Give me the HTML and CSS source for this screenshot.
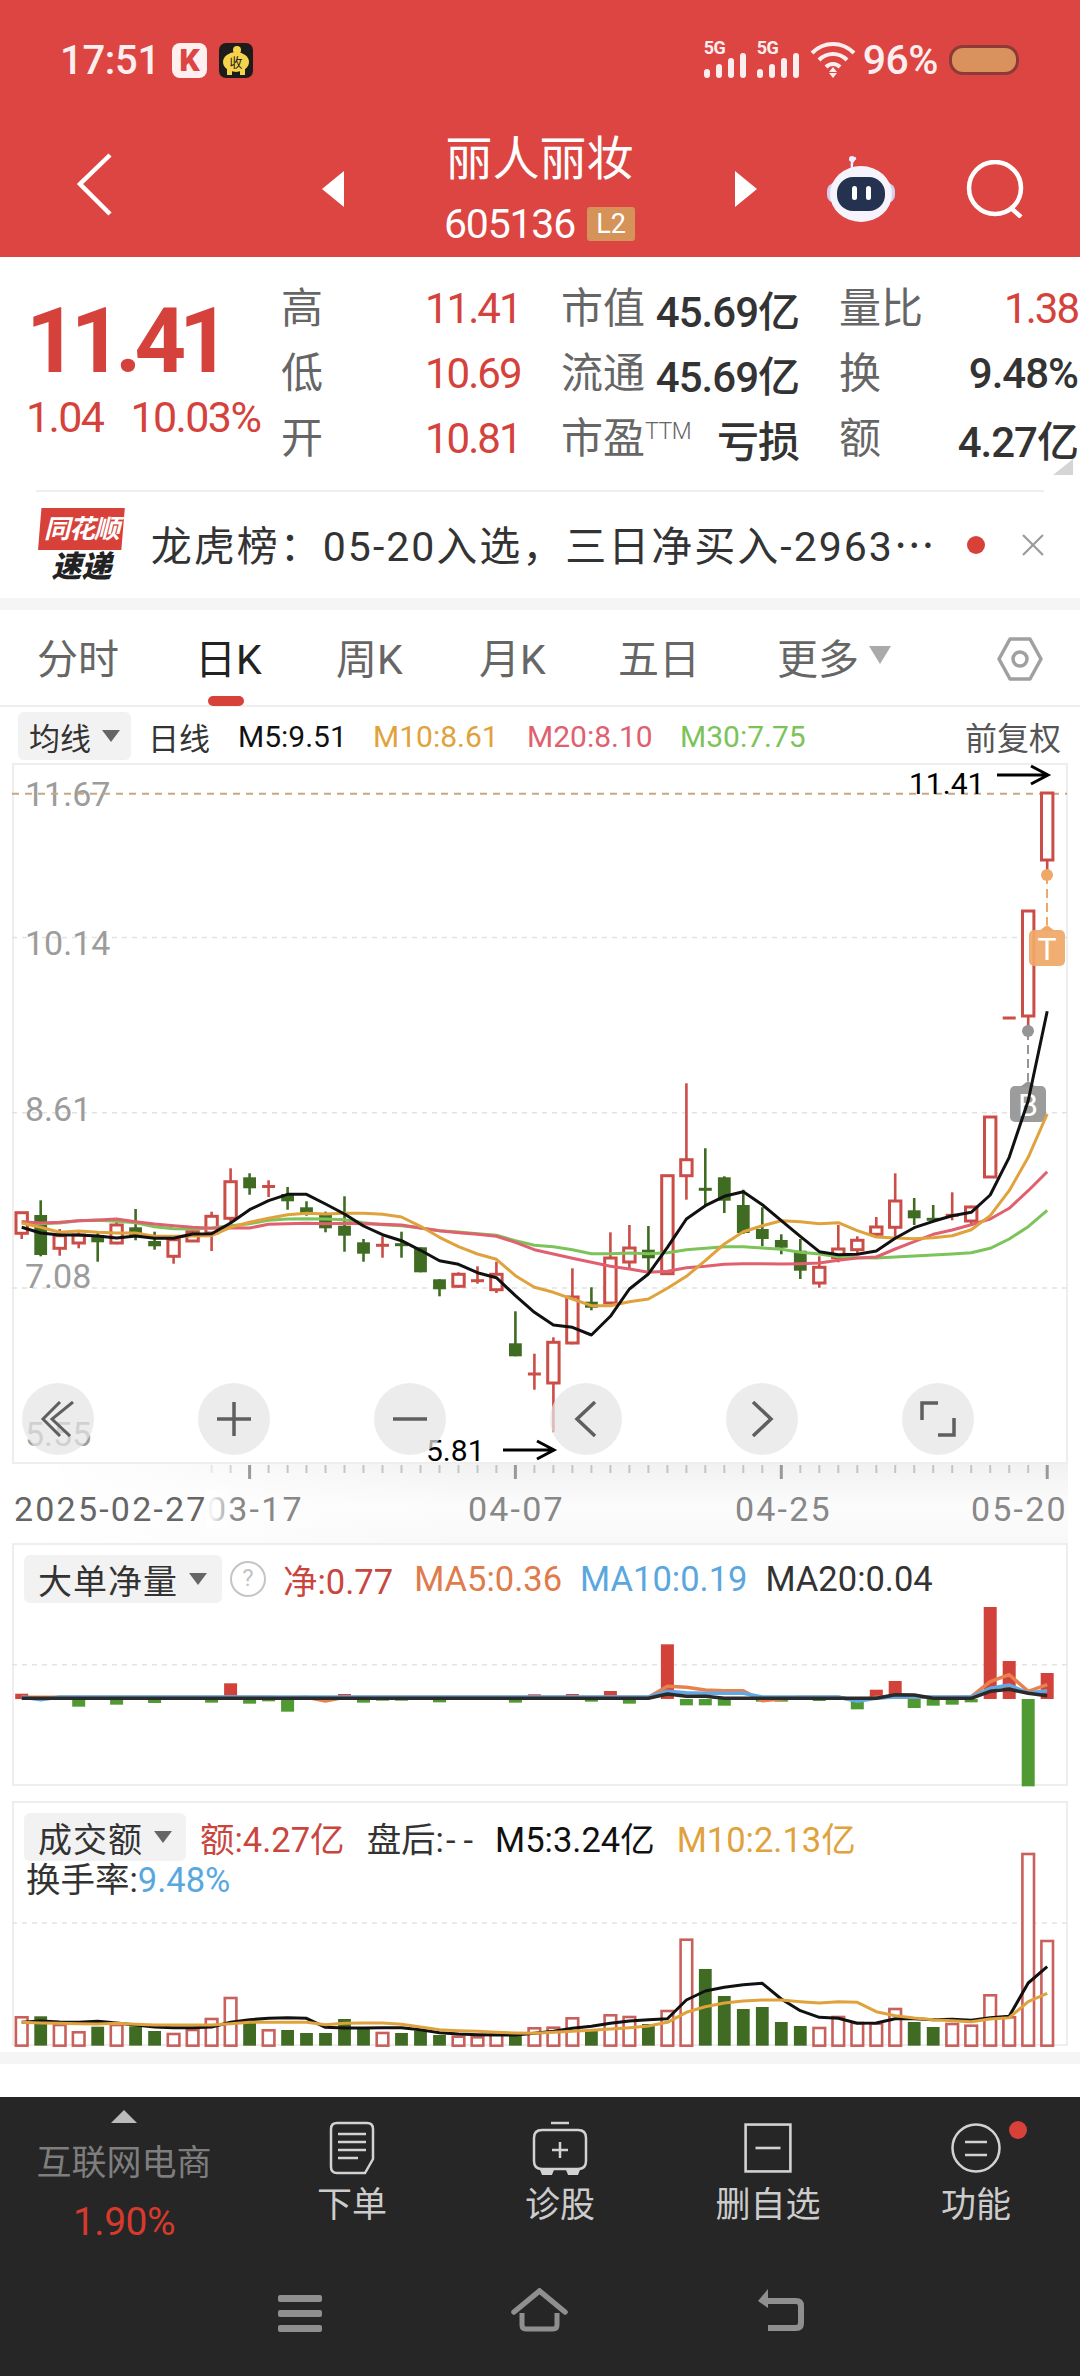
FILE: index.html
```html
<!DOCTYPE html>
<html lang="zh-CN">
<head>
    <meta charset="utf-8">
    <title>丽人丽妆</title>
    <link rel="stylesheet" href="styles.css">
</head>
<body>
    <header class="top">
        <div class="status">
            <span class="clock">17:51</span>
            <span class="k-badge">K</span>
            <svg class="pig" viewBox="0 0 34 35">
                <rect width="34" height="35" rx="7" fill="#1c1c1c"/>
                <circle cx="18" cy="7" r="4" fill="#f5d34a"/>
                <ellipse cx="17" cy="19" rx="13" ry="10" fill="#f5d34a"/>
                <rect x="8" y="26" width="5" height="6" fill="#f5d34a"/>
                <rect x="21" y="26" width="5" height="6" fill="#f5d34a"/>
                <text x="17" y="24" class="pig-text">收</text>
            </svg>
            <span class="spacer"></span>
            <span class="signal"><small>5G</small><i class="b1"></i><i class="b2"></i><i class="b3"></i><i class="b4"></i></span>
            <span class="signal"><small>5G</small><i class="b1"></i><i class="b2"></i><i class="b3"></i><i class="b4"></i></span>
            <svg class="wifi" viewBox="0 0 46 36" fill="none" stroke="#fbeeee" stroke-width="4">
                <path d="M2 11 C14 -1 32 -1 44 11"/>
                <path d="M9 18 C17 10 29 10 37 18"/>
                <path d="M16 25 C20 21 26 21 30 25"/>
                <path d="M19 30 l4 -5 l4 5 z M19 31 l4 5 l4 -5 z" fill="#fbeeee" stroke="none"/>
            </svg>
            <span class="batt-num">96%</span>
            <span class="battery"><i></i></span>
        </div>
        <div class="nav">
            <svg class="back" viewBox="0 0 35 63" fill="none" stroke="#fff" stroke-width="4.5"><path d="M33 2 L3 31 L33 61"/></svg>
            <span class="tri-left"></span>
            <div class="title">
                <div class="name">丽人丽妆</div>
                <div class="code"><span>605136</span><b>L2</b></div>
            </div>
            <span class="tri-right"></span>
            <svg class="robot" viewBox="0 0 72 66">
                <path d="M27 13 C26 6 28 3 31 2" fill="none" stroke="#eef" stroke-width="2.5"/>
                <circle cx="27" cy="3" r="3" fill="#eef"/>
                <rect x="2" y="27" width="68" height="20" rx="8" fill="#d3cff0"/>
                <ellipse cx="36" cy="38" rx="31" ry="28" fill="#f5f4fd"/>
                <rect x="12" y="21" width="48" height="34" rx="16" fill="#25324f"/>
                <rect x="27" y="30" width="5" height="14" rx="2.5" fill="#fff"/>
                <rect x="41" y="30" width="5" height="14" rx="2.5" fill="#fff"/>
            </svg>
            <svg class="search" viewBox="0 0 60 58" fill="none" stroke="#fff" stroke-width="4.5"><circle cx="29" cy="28" r="26"/><path d="M45 48 L55 57"/></svg>
        </div>
    </header>

    <section class="quote">
        <div class="price-box">
            <div class="price">11.41</div>
            <div class="change"><span>1.04</span><span>10.03%</span></div>
        </div>
        <div class="stats">
            <span class="lbl">高</span><span class="val red">11.41</span>
            <div class="pair"><span class="lbl">市值</span><span class="val">45.69亿</span></div>
            <div class="pair"><span class="lbl">量比</span><span class="val red">1.38</span></div>
            <span class="lbl">低</span><span class="val red">10.69</span>
            <div class="pair"><span class="lbl">流通</span><span class="val">45.69亿</span></div>
            <div class="pair"><span class="lbl">换</span><span class="val">9.48%</span></div>
            <span class="lbl">开</span><span class="val red">10.81</span>
            <div class="pair"><span class="lbl">市盈<sup>TTM</sup></span><span class="val">亏损</span></div>
            <div class="pair"><span class="lbl">额</span><span class="val">4.27亿</span></div>
        </div>
        <span class="corner"></span>
    </section>

    <section class="news">
        <div class="news-logo">
            <div class="logo-tag">同花顺</div>
            <div class="logo-sub">速递</div>
        </div>
        <div class="news-text">龙虎榜：05-20入选，三日净买入-2963<span class="dots">…</span></div>
        <span class="news-dot"></span>
        <svg class="news-close" viewBox="0 0 22 22" fill="none" stroke="#9b9b9b" stroke-width="2.2"><path d="M1 1 L21 21 M21 1 L1 21"/></svg>
    </section>
    <div class="band"></div>

    <nav class="tabs">
        <span class="tab t1">分时</span>
        <span class="tab t2 active">日K</span>
        <span class="tab t3">周K</span>
        <span class="tab t4">月K</span>
        <span class="tab t5">五日</span>
        <span class="tab t6">更多<i class="caret big"></i></span>
        <svg class="hex" viewBox="0 0 46 46" fill="none" stroke="#a0a0a0" stroke-width="3.5"><path d="M13 3 H33 L44 23 L33 43 H13 L2 23 Z" stroke-linejoin="round"/><circle cx="23" cy="23" r="7"/></svg>
    </nav>

    <div class="ma-row">
        <span class="pick">均线<i class="caret"></i></span>
        <span class="ma-day">日线</span>
        <span class="ma m5">M5:9.51</span>
        <span class="ma m10">M10:8.61</span>
        <span class="ma m20">M20:8.10</span>
        <span class="ma m30">M30:7.75</span>
        <span class="fq">前复权</span>
    </div>

    <section class="panel main-panel">
        <svg id="kline" class="plot" viewBox="12 764 1055 699"></svg>
        <div class="zoom-btns">
            <span class="zbtn"><svg viewBox="0 0 36 36" fill="none" stroke="#5f5f5f" stroke-width="3"><path d="M20 1 L3 18 L20 35 M33 1 L12 18 L30 35"/></svg></span>
            <span class="zbtn"><svg viewBox="0 0 36 36" fill="none" stroke="#5f5f5f" stroke-width="3.5"><path d="M1 18 H35 M18 1 V35"/></svg></span>
            <span class="zbtn"><svg viewBox="0 0 36 36" fill="none" stroke="#5f5f5f" stroke-width="3.5"><path d="M1 18 H35"/></svg></span>
            <span class="zbtn"><svg viewBox="0 0 36 36" fill="none" stroke="#5f5f5f" stroke-width="3.5"><path d="M27 1 L9 18 L27 35"/></svg></span>
            <span class="zbtn"><svg viewBox="0 0 36 36" fill="none" stroke="#5f5f5f" stroke-width="3.5"><path d="M9 1 L27 18 L9 35"/></svg></span>
            <span class="zbtn"><svg viewBox="0 0 36 36" fill="none" stroke="#5f5f5f" stroke-width="3.5"><path d="M2 19 V2 H18 M34 17 V34 H18"/></svg></span>
        </div>
    </section>

    <div class="axis">
        <svg id="ticks" class="ticks" viewBox="0 1463 1068 20"></svg>
        <div class="dates">
            <span class="d0">2025-02-27</span>
            <span class="d1">03-17</span>
            <span class="d2">04-07</span>
            <span class="d3">04-25</span>
            <span class="d4">05-20</span>
        </div>
    </div>

    <section class="panel sub sub-flow">
        <svg id="flow" class="plot" viewBox="12 1544 1055 243"></svg>
        <div class="sub-head">
            <span class="pick wide">大单净量<i class="caret"></i></span>
            <span class="help">?</span>
            <span class="red2 first">净:0.77</span>
            <span class="orange">MA5:0.36</span>
            <span class="blue">MA10:0.19</span>
            <span class="dark">MA20:0.04</span>
        </div>
    </section>

    <section class="panel sub sub-amount">
        <svg id="amount" class="plot" viewBox="12 1802 1055 245"></svg>
        <div class="sub-head tight">
            <span class="pick wide">成交额<i class="caret"></i></span>
            <span class="red2">额:4.27亿</span>
            <span class="dark">盘后:<span class="dashes">--</span></span>
            <span class="black">M5:3.24亿</span>
            <span class="amber">M10:2.13亿</span>
        </div>
        <div class="turnover">换手率:<span class="blue">9.48%</span></div>
    </section>

    <div class="band lower"></div>
    <div class="blank"></div>

    <footer class="bottom">
        <div class="tools">
            <div class="sector">
                <i class="up-tri"></i>
                <div class="sector-name">互联网电商</div>
                <div class="sector-pct">1.90%</div>
            </div>
            <div class="tool">
                <svg viewBox="0 0 46 54" fill="none" stroke="#d2d2d2" stroke-width="2.5"><path d="M8 2 H38 Q44 2 44 8 V38 L36 52 H8 Q2 52 2 46 V8 Q2 2 8 2 Z"/><path d="M9 13 H37 M9 21 H37 M9 29 H37 M9 37 H29"/></svg>
                <span>下单</span>
            </div>
            <div class="tool">
                <svg viewBox="0 0 56 54" fill="none" stroke="#d2d2d2" stroke-width="2.5"><path d="M19 2 H37"/><path d="M10 9 H46 Q54 9 54 17 V40 Q54 48 46 48 H10 Q2 48 2 40 V17 Q2 9 10 9 Z"/><path d="M20 29 H36 M28 21 V37"/><path d="M9 48 L11 53 H19 L21 48 M35 48 L37 53 H45 L47 48" fill="#d2d2d2"/></svg>
                <span>诊股</span>
            </div>
            <div class="tool">
                <svg class="pad" viewBox="0 0 46 48" fill="none" stroke="#d2d2d2" stroke-width="2.5"><rect x="1.5" y="1.5" width="43" height="45"/><path d="M11 24 H35"/></svg>
                <span>删自选</span>
            </div>
            <div class="tool">
                <svg class="pad" viewBox="0 0 50 50" fill="none" stroke="#d2d2d2" stroke-width="2.5"><circle cx="25" cy="25" r="23.5"/><path d="M14 19 H36 M14 32 H36"/></svg>
                <span>功能</span>
                <i class="tool-dot"></i>
            </div>
        </div>
        <div class="sysnav">
            <span class="menu"><i></i><i></i><i></i></span>
            <svg class="home" viewBox="0 0 57 44" fill="none" stroke="#8f8f8f"><path d="M3 24 L28.5 3 L54 24" stroke-width="5.5" stroke-linecap="round"/><path d="M11 25 V37 Q11 41 15 41 H42 Q46 41 46 37 V25" stroke-width="5"/></svg>
            <svg class="ret" viewBox="0 0 48 43" fill="none" stroke="#8f8f8f" stroke-width="6"><path d="M9 13 H40 Q45 13 45 18 V35 Q45 40 40 40 H12"/><path d="M12 1 L2 13 L12 20 Z" fill="#8f8f8f" stroke="none"/></svg>
        </div>
    </footer>

    <script src="chart.js"></script>
</body>
</html>
```

FILE: styles.css
```css
* {
    box-sizing: border-box;
}

body {
    margin: 0;
    width: 1080px;
    height: 2376px;
    overflow: hidden;
    background: #fff;
    font-family: Roboto, "Noto Sans CJK SC", sans-serif;
    color: #333;
}

i {
    display: block;
}

/* top red bar */
.top {
    height: 257px;
    background: #dc4541;
    color: #fff;
}

.status {
    height: 120px;
    display: flex;
    align-items: center;
    padding: 0 61px 0 60px;
    color: #fbeeee;
}

.clock {
    font-size: 40px;
    font-weight: 500;
    letter-spacing: -0.3px;
    width: 112px;
}

.k-badge {
    width: 35px;
    height: 35px;
    border-radius: 8px;
    background: #fdf0ef;
    color: #dc4541;
    font-size: 32px;
    font-weight: 900;
    line-height: 35px;
    text-align: center;
}

.pig {
    width: 34px;
    height: 35px;
    margin-left: 12px;
}

.pig-text {
    font-size: 13px;
    fill: #222;
    text-anchor: middle;
}

.spacer {
    flex: 1;
}

.signal {
    position: relative;
    width: 42px;
    height: 36px;
    margin-right: 11px;
}

.signal small {
    position: absolute;
    left: 0;
    top: -5px;
    font-size: 18px;
    font-weight: 700;
    letter-spacing: -0.5px;
}

.signal i {
    position: absolute;
    bottom: 0;
    width: 6px;
    border-radius: 3px;
    background: #fbeeee;
}

.signal .b1 { left: 0; height: 9px; }
.signal .b2 { left: 12px; height: 14px; }
.signal .b3 { left: 24px; height: 20px; }
.signal .b4 { left: 36px; height: 25px; }

.wifi {
    width: 46px;
    height: 36px;
}

.batt-num {
    font-size: 41px;
    font-weight: 500;
    margin-left: 7px;
    letter-spacing: -0.5px;
}

.battery {
    width: 70px;
    height: 30px;
    margin-left: 11px;
    border: 3px solid #8b3a35;
    border-radius: 14px;
    background: #d9925e;
}

.nav {
    height: 137px;
    display: flex;
    align-items: center;
    padding-left: 77px;
}

.back {
    width: 35px;
    height: 63px;
    margin-top: -8px;
}

.tri-left,
.tri-right {
    width: 0;
    height: 0;
    border-top: 18px solid transparent;
    border-bottom: 18px solid transparent;
}

.tri-left {
    margin-left: 210px;
    border-right: 22px solid #fff;
}

.tri-right {
    border-left: 22px solid #fff;
}

.title {
    width: 391px;
    text-align: center;
    margin-top: -5px;
}

.name {
    font-size: 47px;
    line-height: 56px;
}

.code {
    display: flex;
    justify-content: center;
    align-items: center;
    gap: 12px;
    margin-top: 20px;
    font-size: 41px;
    line-height: 34px;
    letter-spacing: -1.2px;
}

.code b {
    flex: none;
    width: 48px;
    height: 34px;
    border-radius: 3px;
    background: #d5935a;
    font-size: 27px;
    font-weight: 400;
    letter-spacing: 0;
    line-height: 34px;
}

.robot {
    width: 72px;
    height: 66px;
    margin-left: 68px;
}

.search {
    width: 60px;
    height: 58px;
    margin-left: 69px;
}

/* quote block */
.quote {
    position: relative;
    height: 233px;
    display: flex;
}

.price-box {
    width: 281px;
    padding: 45px 0 0 26px;
    color: #d4423b;
}

.price {
    font-size: 90px;
    line-height: 80px;
    font-weight: 700;
    letter-spacing: -7px;
}

.change {
    display: flex;
    gap: 27px;
    margin: 15px 0 0 0;
    font-size: 43px;
    line-height: 40px;
    letter-spacing: -1.6px;
    white-space: nowrap;
}

.stats {
    display: grid;
    grid-template-columns: 144px 136px 238px 239px;
    grid-auto-rows: 65px;
    align-items: center;
    padding-top: 19px;
}

.pair {
    display: flex;
    justify-content: space-between;
    align-items: center;
}

.stats .pair:nth-child(4n) {
    margin-left: 40px;
    margin-right: -40px;
}

.lbl {
    font-size: 42px;
    color: #666;
    white-space: nowrap;
    margin-bottom: 8px;
}

.lbl sup {
    font-size: 23px;
    font-weight: 300;
    vertical-align: 14px;
    line-height: 0;
    letter-spacing: -0.5px;
}

.val {
    font-size: 42px;
    font-weight: 500;
    color: #333;
    letter-spacing: -1px;
    white-space: nowrap;
}

.val.red {
    color: #d4423b;
    font-weight: 400;
    letter-spacing: -2px;
}

.corner {
    position: absolute;
    right: 7px;
    top: 202px;
    border-left: 20px solid transparent;
    border-bottom: 16px solid #d5d5d5;
}

/* news strip */
.news {
    height: 108px;
    margin: 0 36px;
    width: 1008px;
    display: flex;
    align-items: center;
    border-top: 2px solid #eee;
}

.news-logo {
    width: 87px;
    margin-left: 2px;
}

.logo-tag {
    height: 42px;
    background: #d8413a;
    clip-path: polygon(4% 0, 100% 0, 96% 100%, 0 100%);
    color: #fff;
    font-size: 26px;
    font-weight: 700;
    font-style: italic;
    line-height: 42px;
    text-align: center;
    letter-spacing: -1px;
}

.logo-sub {
    color: #222;
    font-size: 30px;
    font-weight: 900;
    font-style: italic;
    line-height: 30px;
    text-align: center;
    margin-top: 2px;
}

.news-text {
    width: 818px;
    margin: 0 0 4px 26px;
    font-size: 41px;
    letter-spacing: 2px;
    color: #333;
    white-space: nowrap;
}

.dots {
    font-family: "Noto Sans CJK SC", sans-serif;
    letter-spacing: 0;
}

.news-dot {
    width: 18px;
    height: 18px;
    border-radius: 50%;
    background: #d8413a;
}

.news-close {
    width: 22px;
    height: 22px;
    margin-left: 37px;
}

.band {
    height: 12px;
    background: #f5f5f5;
}

/* period tabs */
.tabs {
    position: relative;
    height: 97px;
    display: flex;
    align-items: center;
    padding: 0 0 4px 37px;
    border-bottom: 2px solid #eee;
}

.tab {
    font-size: 41px;
    color: #666;
    display: flex;
    align-items: center;
    white-space: nowrap;
}

.t1 { width: 158px; }
.t2 { width: 141px; }
.t3 { width: 143px; }
.t4 { width: 139px; }
.t5 { width: 159px; }
.t6 { width: 220px; }

.tab.active {
    color: #222;
    position: relative;
}

.tab.active::after {
    content: "";
    position: absolute;
    left: 13px;
    top: 70px;
    width: 36px;
    height: 10px;
    border-radius: 5px;
    background: #d8413a;
}

.caret {
    width: 0;
    height: 0;
    border-left: 9px solid transparent;
    border-right: 9px solid transparent;
    border-top: 12px solid #666;
    margin-left: 11px;
}

.caret.big {
    border-left-width: 11px;
    border-right-width: 11px;
    border-top: 18px solid #aaa;
    margin-left: 10px;
    margin-top: -2px;
}

.hex {
    position: absolute;
    left: 997px;
    top: 26px;
    width: 46px;
    height: 46px;
}

/* moving average row */
.ma-row {
    height: 56px;
    padding: 2px 19px 0 18px;
    display: flex;
    align-items: center;
    font-size: 30px;
    white-space: nowrap;
}

.pick {
    display: flex;
    align-items: center;
    height: 48px;
    width: 113px;
    padding-left: 11px;
    border-radius: 6px;
    background: #f2f2f2;
    color: #333;
}

.ma-row .pick,
.ma-day {
    font-size: 31px;
}

.ma-day {
    margin-left: 17px;
    color: #333;
}

.m5 { margin-left: 28px; color: #111; width: 135px; }
.m10 { color: #dfa23c; width: 154px; }
.m20 { color: #e0606f; width: 153px; }
.m30 { color: #7cc35a; width: 157px; }

.fq {
    margin-left: auto;
    color: #555;
    font-size: 32px;
}

/* chart panels */
.panel {
    position: relative;
    margin-left: 12px;
    width: 1056px;
    border: 2px solid #eee;
}

.main-panel {
    height: 701px;
}

.plot {
    position: absolute;
    left: -2px;
    top: -2px;
    width: 1055px;
    overflow: visible;
}

.main-panel .plot { height: 699px; }
.sub-flow .plot { height: 243px; }
.sub-amount .plot { height: 245px; }

.plot text {
    font-family: Roboto, sans-serif;
}

.zoom-btns {
    position: absolute;
    left: 8px;
    top: 618px;
    display: flex;
    gap: 104px;
}

.zbtn {
    width: 72px;
    height: 72px;
    border-radius: 50%;
    background: rgba(229, 229, 229, 0.72);
    display: flex;
    align-items: center;
    justify-content: center;
}

.zbtn svg {
    width: 36px;
    height: 36px;
}

/* date axis */
.axis {
    width: 1068px;
    height: 80px;
    margin-top: -1px;
    background:
        linear-gradient(90deg, #fff 4%, rgba(255, 255, 255, 0) 45%),
        linear-gradient(180deg, #f1f1f1, #fcfcfc 55%, #f8f8f8);
}

.ticks {
    display: block;
    width: 1068px;
    height: 20px;
}

.dates {
    display: flex;
    padding: 6px 0 0 14px;
    font-size: 34px;
    line-height: 40px;
    letter-spacing: 2.2px;
    color: #888;
    white-space: nowrap;
}

.d0 {
    position: relative;
    width: 193px;
    color: #666;
}

.d0::after {
    content: "";
    position: absolute;
    left: 192px;
    top: 0;
    width: 28px;
    height: 40px;
    background: linear-gradient(90deg, rgba(255, 255, 255, 0.9) 20%, rgba(255, 255, 255, 0));
}

.d1 { width: 261px; }
.d2 { width: 267px; }
.d3 { width: 236px; }

.sub {
    height: 243px;
}

.sub-amount {
    height: 245px;
    margin-top: 15px;
}

.sub-head {
    position: relative;
    display: flex;
    align-items: center;
    gap: 18px;
    padding: 9px 0 0 10px;
    font-size: 34.5px;
    white-space: nowrap;
}

.sub-head.tight {
    gap: 14px;
}

.pick.wide {
    width: 198px;
    padding-left: 14px;
    font-size: 34px;
    letter-spacing: 1px;
    justify-content: space-between;
    padding-right: 15px;
}

.sub-amount .pick.wide {
    width: 162px;
}

.help {
    width: 36px;
    height: 36px;
    margin-left: -10px;
    border: 2.5px solid #c4c4c4;
    border-radius: 50%;
    color: #c4c4c4;
    font-size: 24px;
    line-height: 31px;
    text-align: center;
}

.first {
    margin-left: -1px;
}

.red2 { color: #c9463f; }
.orange { color: #e07b4c; margin-left: 3px; }
.blue { color: #5aa7e0; }
.turnover .blue { margin-left: 0; }
.dark { color: #333; margin-left: 8px; }
.sub-flow .dark { margin-left: 0; }
.black { color: #111; }
.amber { color: #dfa23c; margin-left: 8px; }

.dashes {
    letter-spacing: 8px;
    margin-left: 2px;
}

.turnover {
    position: relative;
    padding-left: 12px;
    font-size: 34.5px;
    line-height: 36px;
    color: #333;
}

.band.lower {
    margin-top: 6px;
}

.blank {
    height: 33px;
}

/* bottom bar */
.bottom {
    height: 279px;
    background: #262626;
    color: #ccc;
}

.tools {
    height: 191px;
    display: grid;
    grid-template-columns: 248px repeat(4, 208px);
}

.sector {
    text-align: center;
    padding-top: 13px;
}

.up-tri {
    width: 0;
    height: 0;
    margin: 0 auto;
    border-left: 13px solid transparent;
    border-right: 13px solid transparent;
    border-bottom: 13px solid #bbb;
}

.sector-name {
    font-size: 35px;
    line-height: 50px;
    margin-top: 16px;
    color: #7e7e7e;
}

.sector-pct {
    font-size: 39px;
    line-height: 44px;
    margin-top: 11px;
    color: #d63a2c;
    letter-spacing: -0.5px;
}

.tool {
    position: relative;
    display: flex;
    flex-direction: column;
    align-items: center;
    padding-top: 24px;
    font-size: 35px;
}

.tool svg {
    height: 54px;
    width: 56px;
}

.tool svg.pad {
    height: 50px;
    margin: 2px 0;
}

.tool span {
    margin-top: 6px;
    line-height: 50px;
    white-space: nowrap;
}

.tool-dot {
    position: absolute;
    left: 137px;
    top: 24px;
    width: 18px;
    height: 18px;
    border-radius: 50%;
    background: #d8413a;
}

.sysnav {
    display: flex;
    align-items: flex-start;
    padding-left: 278px;
}

.menu {
    width: 44px;
    padding-top: 7px;
}

.menu i {
    height: 7px;
    border-radius: 2px;
    background: #8f8f8f;
    margin-bottom: 8px;
}

.home {
    width: 57px;
    height: 44px;
    margin-left: 189px;
}

.ret {
    width: 48px;
    height: 43px;
    margin-left: 188px;
}
```

FILE: chart.js
```js
// y values below are screen samples, 3 units to the pixel, measured from the top of each chart block
const X = i => 21.7 + 18.99 * i;
const RED = '#cb4d47', GREEN = '#3f6b23';

function yMap(base) {
    return z => +(base + z / 3).toFixed(1);
}

function polyline(values, map, color, width) {
    const pts = values.map((z, i) => X(i).toFixed(1) + ',' + map(z)).join(' ');
    return `<polyline points="${pts}" fill="none" stroke="${color}" stroke-width="${width}" stroke-linejoin="round"/>`;
}

function dashed(x1, x2, y, color, width, dash) {
    return `<line x1="${x1}" x2="${x2}" y1="${y}" y2="${y}" stroke="${color}" stroke-width="${width}" stroke-dasharray="${dash}"/>`;
}

// u/d, high, body top, body bottom, low
const candles = [
    ['u',401,401,463,480],['d',364,408,528,532],['u',450,470,508,530],['u',460,468,492,508],
    ['d',462,468,490,548],['u',420,438,492,496],['d',390,445,470,484],['d',458,486,502,512],
    ['u',476,482,532,554],['u',445,458,486,488],['u',398,412,462,516],['u',268,308,418,430],
    ['d',283,295,328,347],['u',304,321,324,354],['d',324,345,367,392],['d',367,385,402,410],
    ['d',398,405,448,460],['d',352,440,470,518],['d',480,490,524,548],['u',472,496,502,536],
    ['d',458,495,499,536],['d',505,505,580,580],['d',601,601,631,652],['u',580,586,622,626],
    ['u',562,603,607,614],['u',548,586,632,642],['d',697,793,832,832],['u',824,883,887,932],
    ['u',775,790,912,1060],['u',568,654,792,796],['d',625,668,686,694],['u',460,537,672,676],
    ['u',438,507,549,572],['d',441,512,538,580],['u',290,290,584,584],['u',13,242,290,362],
    ['d',208,325,337,380],['d',292,295,365,402],['d',332,378,462,465],['d',385,450,480,502],
    ['d',466,483,506,526],['d',480,515,575,600],['u',532,565,612,626],['u',438,510,536,550],
    ['u',472,484,512,525],['u',414,444,466,476],['u',283,366,445,475],['d',357,394,418,438],
    ['d',378,418,424,430],['u',340,407,411,424],['u',380,384,426,438],['u',114,114,294,294],
    ['u',-183,-183,-183,-183],['u',-504,-504,-189,-144],['u',-858,-858,-657,-612]
];

const ma5 = [445,462,468,468,471,477,471,478,478,465,464,432,392,365,346,346,375,405,441,467,485,514,545,556,581,596,650,700,
    738,745,768,712,630,585,505,420,380,352,338,377,425,472,518,527,526,516,478,446,427,410,400,348,235,65,-203];
const ma10 = [432,445,460,456,460,462,462,472,472,471,470,445,430,418,407,403,405,403,403,406,414,442,475,503,525,541,590,625,
    640,660,680,680,668,660,628,592,545,495,458,440,425,428,434,431,455,474,477,479,476,470,452,410,335,235,105];
const ma20 = [428,432,430,425,423,420,428,435,440,445,448,446,447,436,434,433,434,433,434,436,438,447,455,461,466,472,490,512,
    525,538,550,562,570,580,577,566,562,556,554,554,555,554,552,544,537,534,510,488,466,453,437,420,388,335,278];
const ma30 = [428,434,432,425,424,427,431,443,449,450,447,440,434,424,420,419,420,422,431,437,440,447,455,459,464,469,485,499,
    503,512,524,524,522,524,521,512,508,503,503,507,511,520,525,533,536,537,534,531,528,525,521,508,480,443,394];

function arrow(x1, x2, y) {
    return `<path d="M${x1} ${y} H${x2} M${x2 - 17} ${y - 9} L${x2} ${y} L${x2 - 17} ${y + 9}" fill="none" stroke="#000" stroke-width="3"/>`;
}

function flag(x, top, color, letter, dotY) {
    return `<line x1="${x}" x2="${x}" y1="${dotY}" y2="${top}" stroke="${color}" stroke-width="2" stroke-dasharray="9 5"/>` +
        `<circle cx="${x}" cy="${dotY}" r="6" fill="${color}"/>` +
        `<path d="M${x - 8} ${top + 6} L${x} ${top} L${x + 8} ${top + 6} Z" fill="${color}"/>` +
        `<rect x="${x - 18}" y="${top + 5}" width="36" height="36" rx="5" fill="${color}" fill-opacity=".93"/>` +
        `<text x="${x}" y="${top + 35}" font-size="32" fill="#fff" text-anchor="middle">${letter}</text>`;
}

function drawKline() {
    const y = yMap(1080);
    let out = '';

    [938.5, 1113.7, 1289].forEach(g => {
        out += dashed(12, 1067, g, '#e2e2e2', 1.5, '5 5');
    });
    [['11.67', 807], ['10.14', 956], ['8.61', 1122], ['7.08', 1289], ['5.55', 1447]].forEach(([t, b]) => {
        out += `<text x="25" y="${b}" font-size="34" fill="#9c9c9c">${t}</text>`;
    });
    out += dashed(12, 1067, 794.7, '#c8a882', 2, '7 6');

    candles.forEach((c, i) => {
        const x = +X(i).toFixed(1);
        const [kind, high, top, bottom, low] = c;
        const color = kind === 'u' ? RED : GREEN;
        out += `<line x1="${x}" x2="${x}" y1="${y(high)}" y2="${y(low)}" stroke="${color}" stroke-width="2.6"/>`;
        if (bottom - top < 15) {
            out += `<line x1="${x - 6.5}" x2="${x + 6.5}" y1="${y((top + bottom) / 2)}" y2="${y((top + bottom) / 2)}" stroke="${color}" stroke-width="3"/>`;
        } else if (kind === 'u') {
            out += `<rect x="${x - 5.7}" y="${y(top)}" width="11.4" height="${y(bottom) - y(top)}" fill="#fff" stroke="${color}" stroke-width="3"/>`;
        } else {
            out += `<rect x="${x - 6.4}" y="${y(top)}" width="12.8" height="${y(bottom) - y(top)}" fill="${color}"/>`;
        }
    });

    out += flag(1047, 926, '#f0a868', 'T', 876);
    out += flag(1028, 1082, '#959595', 'B', 1032);

    out += polyline(ma30, y, '#7cc35a', 3);
    out += polyline(ma20, y, '#e0606f', 3);
    out += polyline(ma10, y, '#dfa23c', 3);
    out += polyline(ma5, y, '#111', 3);

    out += `<text x="909" y="795" font-size="30" fill="#000">11.41</text>` + arrow(997, 1048, 776);
    out += `<text x="426" y="1462" font-size="30" fill="#000">5.81</text>` + arrow(503, 554, 1451);
    document.getElementById('kline').innerHTML = out;
}

function drawTicks() {
    let out = '';
    for (let i = 10; i < 55; i++) {
        const major = i === 12 || i === 26 || i === 40 || i === 54;
        const x = X(i).toFixed(1);
        const op = i < 12 ? (i - 9) / 3 : 1;
        out += `<line x1="${x}" x2="${x}" y1="1465" y2="${major ? 1479 : 1473}" stroke="${major ? '#999' : '#c4c4c4'}" stroke-width="${major ? 3 : 2}" opacity="${op}"/>`;
    }
    document.getElementById('ticks').innerHTML = out;
}

function spread(base, changes) {
    const list = new Array(55).fill(base);
    Object.keys(changes).forEach(k => { list[k] = changes[k]; });
    return list;
}

function drawFlow() {
    const y = yMap(1530);
    const zero = 510;
    const bars = {0:494,3:533,5:527,7:522,9:502,10:521,11:463,12:524,13:517,14:548,15:502,17:495,18:521,19:515,20:515,22:520,26:521,27:496,
        29:495,30:518,31:486,32:524,34:346,35:529,36:529,37:530,39:518,40:518,42:516,44:541,45:482,46:456,47:537,48:530,49:527,50:520,
        51:234,52:396,53:772,54:432};
    let out = dashed(12, 1067, 1665.7, '#e4e4e4', 1.5, '5 5');
    Object.keys(bars).forEach(k => {
        const x = X(+k) - 6.5;
        const z = bars[k];
        const color = z < zero ? '#d2423a' : '#4f9a33';
        out += `<rect x="${x.toFixed(1)}" y="${y(Math.min(z, zero))}" width="13" height="${Math.abs(z - zero) / 3}" fill="${color}"/>`;
    });
    const orange = spread(505, {14:508,16:516,34:472,35:475,36:483,37:485,38:485,39:515,40:510,44:515,45:505,50:503,51:458,52:437,53:487,54:467});
    const blue = spread(504, {1:512,34:487,35:491,36:493,37:493,38:493,44:517,45:508,51:478,52:468,53:492,54:485});
    const black = spread(508, {34:495,35:502,36:502,46:497,47:498,51:487,52:481,53:493,54:500});
    out += polyline(orange, y, '#e9814e', 3.5);
    out += polyline(blue, y, '#62a8e2', 3.5);
    out += polyline(black, y, '#2a2a2a', 3.5);
    document.getElementById('flow').innerHTML = out;
}

function drawAmount() {
    const y = yMap(1790);
    const base = 770;
    // negative means a down day
    const bars = [685,-682,708,730,-713,708,-712,-726,735,723,690,627,-695,724,-723,-732,-732,-690,-715,732,-732,-725,-738,743,745,737,-738,718,
        716,688,-722,679,684,-705,666,452,-540,-621,-660,-654,-699,-711,717,684,702,704,660,-699,-714,705,710,619,685,195,456];
    const black = [700,696,699,700,697,702,708,714,716,716,714,700,692,688,686,688,715,717,717,716,716,722,731,735,737,738,738,733,
        727,718,712,703,696,692,689,633,606,595,587,583,630,665,685,688,703,702,689,689,692,691,694,686,682,582,533];
    const amber = [700,702,703,704,705,703,706,708,708,708,708,704,700,700,700,700,707,703,702,702,706,714,722,725,727,730,732,733,
        730,727,724,720,716,711,700,670,653,642,636,633,633,638,642,638,640,668,680,687,692,695,698,690,686,638,613];
    let out = dashed(12, 1067, 1924, '#e4e4e4', 1.5, '5 5');
    bars.forEach((v, i) => {
        const x = X(i);
        if (v < 0) {
            out += `<rect x="${(x - 6.4).toFixed(1)}" y="${y(-v)}" width="12.8" height="${(base + v) / 3}" fill="${GREEN}"/>`;
        } else {
            out += `<rect x="${(x - 5.8).toFixed(1)}" y="${y(v)}" width="11.6" height="${(base - v) / 3}" fill="#fff" stroke="#c9605c" stroke-width="2.6"/>`;
        }
    });
    out += polyline(black, y, '#111', 3);
    out += polyline(amber, y, '#dfa23c', 3);
    document.getElementById('amount').innerHTML = out;
}

drawKline();
drawTicks();
drawFlow();
drawAmount();
```
